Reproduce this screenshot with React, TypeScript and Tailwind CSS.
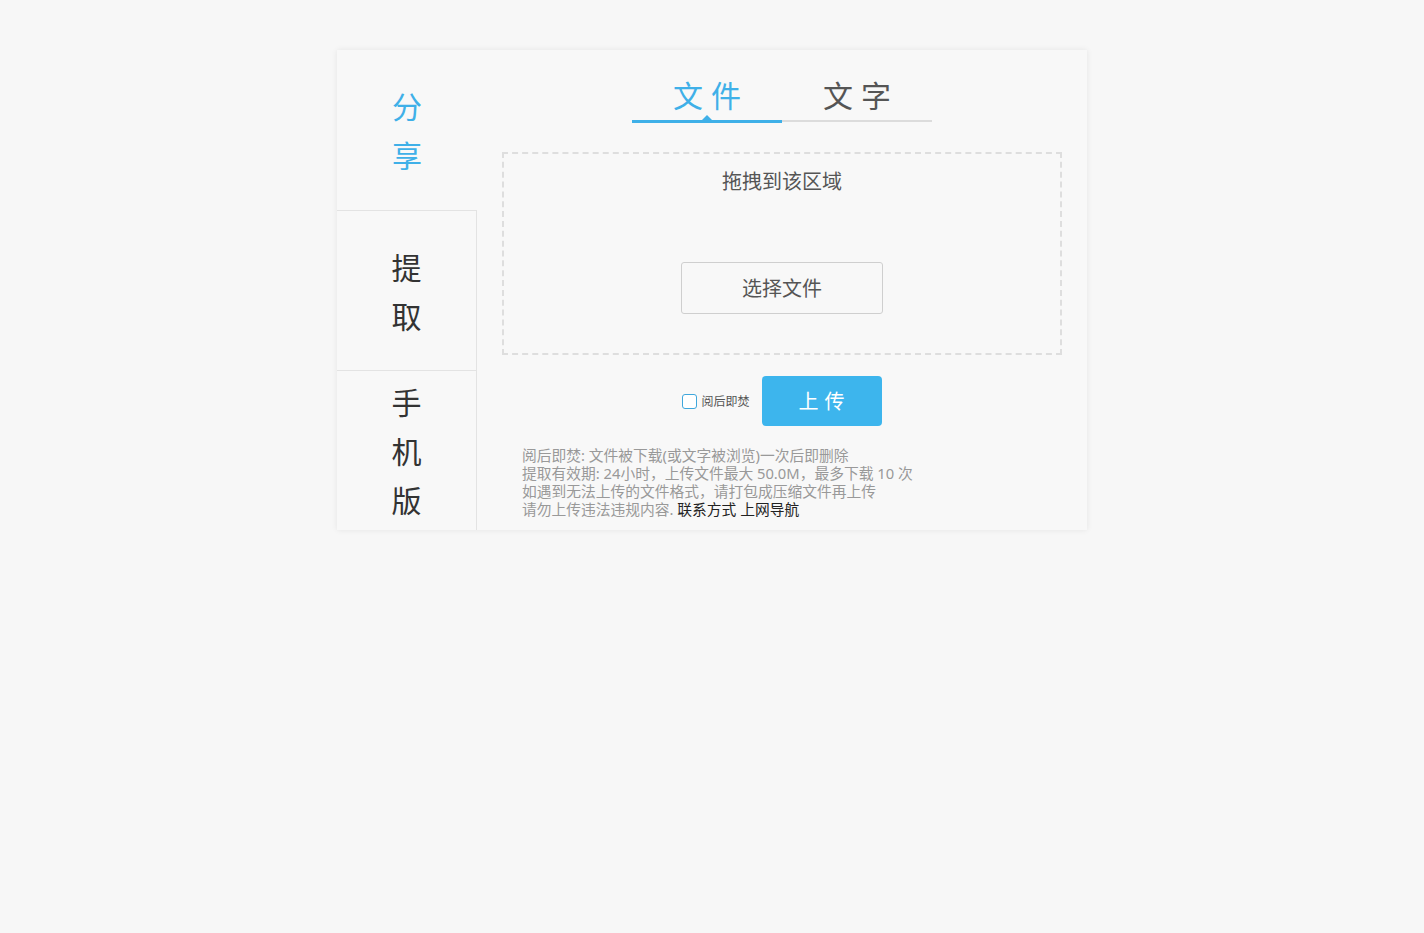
import React, { useState } from "react";

const font = { fontFamily: '"Microsoft YaHei", "Noto Sans CJK SC", "Noto Sans", sans-serif' };
const infoFont = { fontFamily: '"Noto Sans", "Noto Sans CJK SC", sans-serif' };

const SideItem = ({ chars, active, first }: { chars: string[]; active?: boolean; first?: boolean }) => (
  <div
    className={`flex flex-col items-center justify-center ${
      first ? "h-[160px]" : "h-[160px] border-t border-r border-[#e3e3e3]"
    } ${active ? "text-[#3fb0e8]" : "text-[#333]"}`}
  >
    {chars.map((c, i) => (
      <div key={i} className="text-[30px] leading-[49px]">
        {c}
      </div>
    ))}
  </div>
);

export default function App() {
  const [tab, setTab] = useState("file");
  const [burn, setBurn] = useState(false);

  return (
    <div className="min-h-[933px] bg-[#f7f7f7] pt-[50px]" style={font}>
      <div className="mx-auto flex h-[480px] w-[750px] bg-[#f8f8f8] shadow-[0_0_6px_rgba(0,0,0,0.08)]">
        <div className="w-[140px] flex flex-col">
          <SideItem chars={["分", "享"]} active first />
          <SideItem chars={["提", "取"]} />
          <div className="flex-1 flex flex-col items-center justify-center border-t border-r border-[#e3e3e3] text-[#333]">
            {["手", "机", "版"].map((c) => (
              <div key={c} className="text-[30px] leading-[49px]">
                {c}
              </div>
            ))}
          </div>
        </div>

        <div className="flex-1 flex flex-col items-center">
          <div className="mt-[24px] flex">
            <div
              className={`relative w-[150px] h-[48px] text-center cursor-pointer ${
                tab === "file" ? "text-[#3fb0e8]" : "text-[#555]"
              }`}
              onClick={() => setTab("file")}
            >
              <div className="text-[30px] leading-[40px] tracking-[8px] pl-[8px]">文件</div>
              <div
                className={`absolute left-0 right-0 top-[46px] ${
                  tab === "file" ? "h-[3px] bg-[#3fb0e8]" : "h-[2px] bg-[#dcdcdc]"
                }`}
              />
              {tab === "file" && (
                <div className="absolute left-1/2 top-[41px] -ml-[5px] w-0 h-0 border-l-[5px] border-r-[5px] border-b-[5px] border-l-transparent border-r-transparent border-b-[#3fb0e8]" />
              )}
            </div>
            <div
              className={`relative w-[150px] h-[48px] text-center cursor-pointer ${
                tab === "text" ? "text-[#3fb0e8]" : "text-[#555]"
              }`}
              onClick={() => setTab("text")}
            >
              <div className="text-[30px] leading-[40px] tracking-[8px] pl-[8px]">文字</div>
              <div
                className={`absolute left-0 right-0 top-[46px] ${
                  tab === "text" ? "h-[3px] bg-[#3fb0e8]" : "h-[2px] bg-[#dcdcdc]"
                }`}
              />
              {tab === "text" && (
                <div className="absolute left-1/2 top-[41px] -ml-[5px] w-0 h-0 border-l-[5px] border-r-[5px] border-b-[5px] border-l-transparent border-r-transparent border-b-[#3fb0e8]" />
              )}
            </div>
          </div>

          <div className="mt-[30px] w-[560px] h-[203px] border-2 border-dashed border-[#dedede] flex flex-col items-center">
            <div className="mt-[12px] text-[20px] leading-[30px] text-[#555]">拖拽到该区域</div>
            <button className="mt-[66px] w-[202px] h-[52px] border border-[#cfcfcf] rounded-[3px] bg-[#f8f8f8] text-[20px] text-[#555]">
              选择文件
            </button>
          </div>

          <div className="mt-[21px] flex items-center">
            <label className="flex items-center cursor-pointer select-none" onClick={() => setBurn(!burn)}>
              <span
                className={`w-[15px] h-[15px] rounded-[3px] border border-[#3fa7dc] ${
                  burn ? "bg-[#3fb0e8]" : "bg-white"
                }`}
              />
              <span className="ml-[4px] text-[12px] text-[#555]">阅后即焚</span>
            </label>
            <button className="ml-[12px] w-[120px] h-[50px] rounded-[4px] bg-[#3db5ed] text-white text-[20px] tracking-[6px] pl-[6px]">
              上传
            </button>
          </div>

          <div className="mt-[20px] self-start ml-[45px] text-[14.75px] leading-[18px] text-[#999]" style={infoFont}>
            <div>阅后即焚: 文件被下载(或文字被浏览)一次后即删除</div>
            <div>提取有效期: 24小时，上传文件最大 50.0M，最多下载 10 次</div>
            <div>如遇到无法上传的文件格式，请打包成压缩文件再上传</div>
            <div>
              请勿上传违法违规内容. <span className="text-[#222]">联系方式</span>{" "}
              <span className="text-[#222]">上网导航</span>
            </div>
          </div>
        </div>
      </div>
    </div>
  );
}
